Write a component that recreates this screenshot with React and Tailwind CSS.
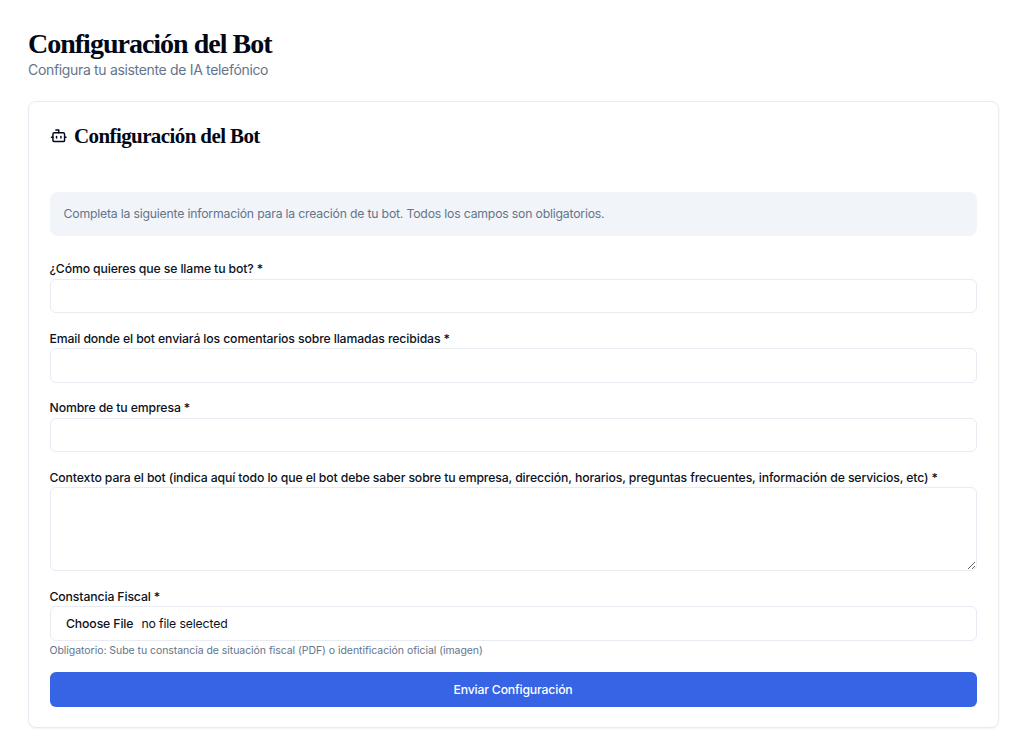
import React from 'react';
import { Bot } from 'lucide-react';

const inputClass =
  'block w-full h-[34.5px] rounded-[6px] border border-[#e8ebf2] bg-white px-3 text-[12.25px] text-[#0b1222] outline-none';
const labelClass = 'block text-[12.25px] leading-[14px] tracking-[-0.13px] font-medium text-[#0b1222] mb-[2.5px]';

const Field = ({ label, children }) => (
  <div>
    <label className={labelClass}>{label}</label>
    {children}
  </div>
);

export default function App() {
  return (
    <div className="min-h-screen bg-white px-[28px] pt-[28px] font-['Inter',sans-serif] text-[#0b1222]">
      <h1 className="font-['Liberation_Serif',serif] font-bold text-[28px] leading-[31px] tracking-[-1px] text-[#020817]">
        Configuración del Bot
      </h1>
      <p className="text-[14px] leading-[21px] tracking-[-0.33px] text-[#64748b]">Configura tu asistente de IA telefónico</p>

      <div className="mt-[20.5px] w-[970.5px] h-[627.5px] rounded-[8px] border border-[#e8ebf2] bg-white pl-[20.5px] pr-[21px] shadow-[0_1px_2px_rgba(0,0,0,0.05)]">
        <div className="flex items-center gap-[7px] pt-[20.5px] mb-[41.5px]">
          <Bot size={17.5} strokeWidth={2} className="text-[#020817]" />
          <h2 className="font-['Liberation_Serif',serif] font-bold text-[21px] leading-[28px] tracking-[-0.6px] text-[#020817]">
            Configuración del Bot
          </h2>
        </div>

        <div className="h-[44.5px] flex items-center rounded-[8px] bg-[#f1f4f9] px-[14px] pt-[1px] text-[12.25px] tracking-[-0.2px] text-[#64748b]">
          Completa la siguiente información para la creación de tu bot. Todos los campos son obligatorios.
        </div>

        <form className="mt-[26px] flex flex-col gap-[18.5px]">
          <Field label="¿Cómo quieres que se llame tu bot? *">
            <input type="text" className={inputClass} />
          </Field>
          <Field label="Email donde el bot enviará los comentarios sobre llamadas recibidas *">
            <input type="email" className={inputClass} />
          </Field>
          <Field label="Nombre de tu empresa *">
            <input type="text" className={inputClass} />
          </Field>
          <Field label="Contexto para el bot (indica aquí todo lo que el bot debe saber sobre tu empresa, dirección, horarios, preguntas frecuentes, información de servicios, etc) *">
            <textarea className="block w-full h-[84px] rounded-[6px] border border-[#e8ebf2] bg-white px-3 py-2 text-[12.25px] outline-none" />
          </Field>
          <div>
            <label className={labelClass}>Constancia Fiscal *</label>
            <div className="flex items-center h-[34.5px] rounded-[6px] border border-[#e8ebf2] bg-white px-[15.5px] pt-[2px] text-[12.25px] tracking-[-0.13px] text-[#0b1222]">
              <span className="font-medium">Choose File</span>
              <span className="ml-[8px]">no file selected</span>
            </div>
            <p className="mt-[5px] -mb-[2.5px] text-[10.5px] leading-[10.5px] tracking-[-0.05px] text-[#64748b]">
              Obligatorio: Sube tu constancia de situación fiscal (PDF) o identificación oficial (imagen)
            </p>
          </div>
          <button type="button" className="h-[34.5px] rounded-[6px] bg-[#3763e5] pt-[1px] text-[12.25px] tracking-[-0.18px] font-medium text-white">
            Enviar Configuración
          </button>
        </form>
      </div>
    </div>
  );
}
